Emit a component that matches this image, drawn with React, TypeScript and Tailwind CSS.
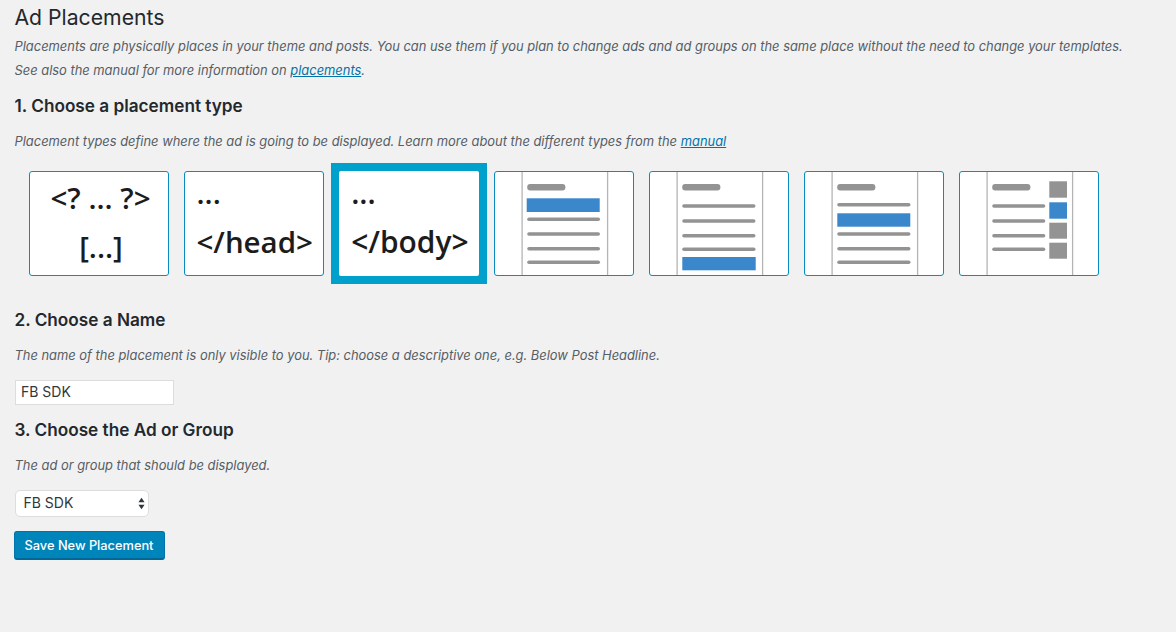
const sans = "font-['Inter','Liberation_Sans',Arial,sans-serif]";

function Lines({ ys, x2 = 105 }: { ys: number[]; x2?: number }) {
  return (
    <>
      {ys.map((y) => (
        <rect key={y} x="32.2" y={y} width={x2 - 32.2} height="3.5" rx="1.75" fill="#939393" />
      ))}
    </>
  );
}

function Page({ children }: { children?: React.ReactNode }) {
  return (
    <>
      <line x1="27.1" y1="0" x2="27.1" y2="103" stroke="#b4b4b4" strokeWidth="1.3" />
      <line x1="112.6" y1="0" x2="112.6" y2="103" stroke="#b4b4b4" strokeWidth="1.3" />
      <rect x="32.2" y="12" width="38.2" height="6.6" rx="3" fill="#939393" />
      {children}
    </>
  );
}

function CodeText({ x, y, anchor, children }: { x: number; y: number; anchor?: "middle"; children: string }) {
  return (
    <text
      x={x}
      y={y}
      textAnchor={anchor}
      fontFamily="'Open Sans', sans-serif"
      fontWeight="600"
      fontSize="29.5"
      fill="#1c1c1c"
    >
      {children}
    </text>
  );
}

const pictures = [
  <>
    <CodeText x={70.5} y={37} anchor="middle">{"<? ... ?>"}</CodeText>
    <CodeText x={71} y={86} anchor="middle">{"[...]"}</CodeText>
  </>,
  <>
    <CodeText x={11.5} y={32}>...</CodeText>
    <CodeText x={11.5} y={80.5}>{"</head>"}</CodeText>
  </>,
  <>
    <CodeText x={12} y={32}>...</CodeText>
    <CodeText x={12} y={80.5}>{"</body>"}</CodeText>
  </>,
  <Page>
    <rect x="31.7" y="26.3" width="73" height="13.7" fill="#3a87cb" />
    <Lines ys={[45.5, 60.3, 75, 88.5]} />
  </Page>,
  <Page>
    <Lines ys={[32.3, 47.3, 62, 75.5]} x2={105.5} />
    <rect x="32.3" y="85" width="73.4" height="13.3" fill="#3a87cb" />
  </Page>,
  <Page>
    <Lines ys={[31, 60.3, 75, 88.5]} x2={105.5} />
    <rect x="32.3" y="41.3" width="73" height="13.4" fill="#3a87cb" />
  </Page>,
  <Page>
    <Lines ys={[32.3, 47.3, 62, 75.5]} x2={85.3} />
    <rect x="89.3" y="9.3" width="17.7" height="16.4" fill="#939393" />
    <rect x="89.3" y="30.3" width="17.7" height="16.4" fill="#3a87cb" />
    <rect x="89.3" y="50.7" width="17.7" height="16" fill="#939393" />
    <rect x="89.3" y="70.7" width="17.7" height="16" fill="#939393" />
  </Page>,
];

function Card({ index, selected }: { index: number; selected?: boolean }) {
  return (
    <div
      className={
        selected
          ? "-m-2 w-[156px] h-[121px] shrink-0 border-8 border-[#00a0cc] bg-[#00a0cc]"
          : "w-[140px] h-[105px] shrink-0 rounded-[3px] border border-[#0a8cc0] bg-white"
      }
    >
      <svg
        viewBox="0 0 138 103"
        className={selected ? "block w-[140px] h-[105px] bg-white rounded-[2px]" : "block w-[138px] h-[103px]"}
      >
        {pictures[index]}
      </svg>
    </div>
  );
}

function Heading({ children, className }: { children: string; className: string }) {
  return <h2 className={`text-[17.2px] leading-[22px] font-semibold text-[#23282d] ${className}`}>{children}</h2>;
}

function Note({ children, className }: { children: React.ReactNode; className: string }) {
  return <p className={`-mb-px text-[12.9px] leading-[24px] italic text-[#555d66] ${className}`}>{children}</p>;
}

export default function App() {
  return (
    <div className={`min-h-[632px] bg-[#f1f1f1] pl-[14.5px] pt-[3px] ${sans}`}>
      <h1 className="text-[21.2px] leading-[29px] text-[#23282d]">Ad Placements</h1>
      <Note className="mt-[3px]">
        Placements are physically places in your theme and posts. You can use them if you plan to change ads and ad
        groups on the same place without the need to change your templates.
      </Note>
      <Note className="mt-px">
        See also the manual for more information on{" "}
        <a href="#placements" className="text-[#0073aa] underline">
          placements
        </a>
        .
      </Note>

      <Heading className="mt-[13px]">1. Choose a placement type</Heading>
      <Note className="mt-[13px]">
        Placement types define where the ad is going to be displayed. Learn more about the different types from the{" "}
        <a href="#manual" className="text-[#0073aa] underline">
          manual
        </a>
      </Note>

      <div className="ml-[14.5px] mt-[18px] flex gap-[15px]">
        {pictures.map((_, i) => (
          <Card key={i} index={i} selected={i === 2} />
        ))}
      </div>

      <Heading className="mt-[33px]">2. Choose a Name</Heading>
      <Note className="mt-[13px]">
        The name of the placement is only visible to you. Tip: choose a descriptive one, e.g. Below Post Headline.
      </Note>
      <input
        readOnly
        value="FB SDK"
        className="mt-[13px] ml-[0.5px] block h-[25px] w-[159px] border border-[#ddd] bg-white px-[5px] pb-[2px] text-[14px] text-[#32373c] outline-none"
      />

      <Heading className="mt-[14px]">3. Choose the Ad or Group</Heading>
      <Note className="mt-[13px]">The ad or group that should be displayed.</Note>
      <div className="relative mt-[13px] h-[27px] w-[134px]">
        <select className="block h-full w-full appearance-none rounded-[5px] border border-[#ddd] bg-white pl-[8px] pb-[2px] text-[14px] text-[#32373c] outline-none">
          <option>FB SDK</option>
        </select>
        <svg viewBox="0 0 8 14" className="pointer-events-none absolute right-[4px] top-[7px] h-[13px] w-[7px]">
          <path d="M4 0.5 7.5 5.5H0.5Z M4 13.5 0.5 8.5H7.5Z" fill="#32373c" />
        </svg>
      </div>
      <button className="-ml-px mt-[14px] block h-[29px] w-[151px] rounded-[3px] border border-[#0073aa] border-b-2 border-b-[#006799] bg-[#0085ba] pt-[2px] text-[12.8px] font-medium text-white">
        Save New Placement
      </button>
    </div>
  );
}
